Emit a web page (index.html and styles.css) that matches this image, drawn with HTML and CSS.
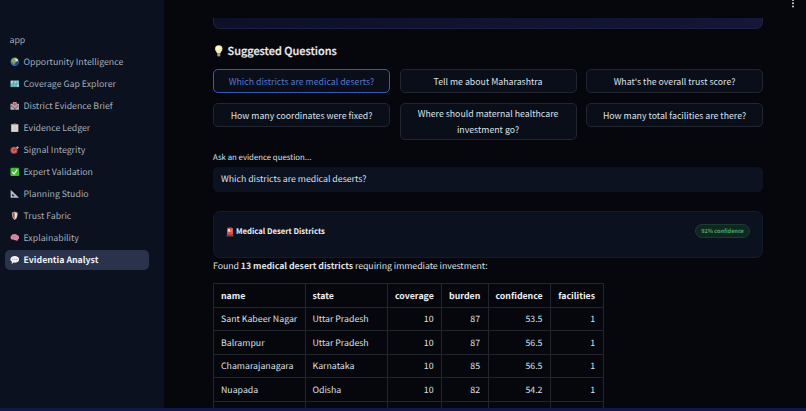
FILE: index.html
```html
<!DOCTYPE html>
<html lang="en">
<head>
<meta charset="utf-8">
<title>Evidentia Analyst</title>
<link rel="stylesheet" href="styles.css">
</head>
<body>
<div class="app">
  <nav class="sidebar">
    <a class="link"><span>app</span></a>
    <a class="link"><svg viewBox="0 0 10 10"><circle cx="5" cy="5" r="4.4" fill="#3d72b8"/><path d="M2 2Q4 0 6 1L5 3 6 5 4 8 3 6 1 5Z" fill="#85a65b"/><path d="M5 1.5Q8 1 8.5 4L6 5Z" fill="#e4e3b0"/><path d="M7 5L9 5 7 9 5 8Z" fill="#233e83"/></svg><span>Opportunity Intelligence</span></a>
    <a class="link"><svg viewBox="0 0 10 10"><path d="M.5 1.5H9.5V8.5H.5Z" fill="#6eb6c7"/><path d="M1 2L4 2 3 4 1 5ZM5 2H8L7 5 5 4ZM3 6L5 5 4 8ZM7 6H9V8H7Z" fill="#d0dfc0"/><path d="M3.5 1.5V8.5M6.5 1.5V8.5" stroke="#397e98" stroke-width=".6"/></svg><span>Coverage Gap Explorer</span></a>
    <a class="link"><svg viewBox="0 0 10 10"><path d="M.5 3H3V1H7V3H9.5V9.3H.5Z" fill="#b7abb2"/><path d="M4.3 1.5H5.7V2.6H6.8V4H5.7V5H4.3V4H3.2V2.6H4.3Z" fill="#d34e58"/><path d="M1.3 4.5H2.5V6H1.3ZM7.5 4.5H8.7V6H7.5ZM2.6 6H4V7H2.6ZM6 6H7.4V7H6ZM4.2 7H5.8V9.3H4.2Z" fill="#605867"/></svg><span>District Evidence Brief</span></a>
    <a class="link"><svg viewBox="0 0 10 10"><rect x="1" y="1" width="8" height="8.6" rx=".6" fill="#a99581"/><path d="M1.7 2H8.3V9H1.7Z" fill="#dedbd7"/><path d="M3.3.6H6.7V2.2H3.3Z" fill="#999ba2"/><path d="M3 4H7M3 5.5H7M3 7H7" stroke="#b8b8ba" stroke-width=".5"/></svg><span>Evidence Ledger</span></a>
    <a class="link"><svg viewBox="0 0 10 10"><circle cx="4.2" cy="5.6" r="3.7" fill="#c74842"/><circle cx="4.2" cy="5.6" r="2.3" fill="#d98078"/><circle cx="4.2" cy="5.6" r="1.5" fill="#c63833"/><path d="M4.5 5.4L8 2" stroke="#384653" stroke-width=".8"/><path d="M6.2 3.2L7.8 .8 8.3 2 9.8 2.1 8 4.2Z" fill="#91bfb4"/></svg><span>Signal Integrity</span></a>
    <a class="link"><svg viewBox="0 0 10 10"><rect x=".5" y=".7" width="9" height="8.8" rx="1.2" fill="#43b934"/><path d="M2.4 5.2L4.3 7.4 7.7 2.6" fill="none" stroke="#f5fff2" stroke-width="1.2"/></svg><span>Expert Validation</span></a>
    <a class="link"><svg viewBox="0 0 10 10"><path d="M.7.8L9.5 9.2H.7ZM2.4 5V7.5H5Z" fill="#b4c2cf" fill-rule="evenodd"/></svg><span>Planning Studio</span></a>
    <a class="link"><svg viewBox="0 0 10 10"><path d="M5 .5Q6.2 1.5 8 1.5V4Q7.9 7.7 5 9.6 2.1 7.7 2 4V1.5Q3.8 1.5 5 .5Z" fill="#b8b5b3"/><path d="M5 1.5Q4 2.3 2.7 2.4V4Q2.9 7 5 8.6Z" fill="#a55545"/><path d="M5 1.5Q6 2.3 7.3 2.4V4Q7.1 7 5 8.6Z" fill="#eee0d3"/></svg><span>Trust Fabric</span></a>
    <a class="link"><svg viewBox="0 0 10 10"><path d="M1 6Q-.1 4 1.3 2.8 2.2 1.1 4 1.4 6 .7 7.4 2 9.5 2.5 9.5 4.5 9.9 6 8.4 6.6L7.6 8.4 6 7.5Q4.5 8 3.4 6.8 1.8 7.3 1 6Z" fill="#dc8fa7"/><path d="M2 3.8Q3.3 2.6 4.2 4M5 2.6Q6.8 3 6.3 4.5M2.8 5.5Q5 4.6 5.3 6M7 5.3Q8 4.5 8.4 5.2" fill="none" stroke="#ac5778" stroke-width=".6"/></svg><span>Explainability</span></a>
    <a class="link current"><svg viewBox="0 0 10 10"><path d="M5 1C7.7 1 9.6 2.4 9.6 4.6S7.7 8.1 5 8.1L4 8 1.7 9.4 2.1 7.3C1 6.7.4 5.8.4 4.6.4 2.4 2.3 1 5 1Z" fill="#f2f2f4"/><path d="M2.5 4.6H3.4M4.6 4.6H5.5M6.7 4.6H7.6" stroke="#777e8d" stroke-width=".9"/></svg><span>Evidentia Analyst</span></a>
  </nav>
  <main class="main">
    <svg class="menu" viewBox="0 0 4 12"><circle cx="2" cy="2" r="1" /><circle cx="2" cy="5.2" r="1"/><circle cx="2" cy="8.4" r="1"/></svg>
    <div class="hero"></div>
    <h3 class="heading"><svg viewBox="0 0 10 12"><path d="M5 .3A3.7 3.7 0 0 1 8.7 4C8.7 6 7 6.7 6.7 8.5H3.3C3 6.7 1.3 6 1.3 4A3.7 3.7 0 0 1 5 .3Z" fill="#f8e9ae"/><circle cx="4.3" cy="3.3" r="1.8" fill="#fff9df"/><path d="M3.5 8.5H6.5V10.7L5.7 11.6H4.3L3.5 10.7Z" fill="#a09f9a"/></svg><span>Suggested Questions</span></h3>
    <div class="questions">
      <button class="question active"><span>Which districts are medical deserts?</span></button>
      <button class="question"><span>Tell me about Maharashtra</span></button>
      <button class="question"><span>What's the overall trust score?</span></button>
      <button class="question"><span>How many coordinates were fixed?</span></button>
      <button class="question"><span>Where should maternal healthcare<br>investment go?</span></button>
      <button class="question"><span>How many total facilities are there?</span></button>
    </div>
    <div class="label"><span>Ask an evidence question...</span></div>
    <div class="input"><span>Which districts are medical deserts?</span></div>
    <section class="card">
      <div class="card-title"><svg viewBox="0 0 8 10"><rect x="1" y=".6" width="6" height="7.8" rx="1.6" fill="#d45450"/><path d="M2 2H4V4.8H2Z" fill="#ffd9cb"/><path d="M4 5L6 2.5" stroke="#f4a091"/><path d="M.5 7.6H7.5V9.5H.5Z" fill="#833f42"/></svg><span>Medical Desert Districts</span></div>
      <div class="badge"><span>92% confidence</span></div>
    </section>
    <p class="found"><span>Found <b>13 medical desert districts</b> requiring immediate investment:</span></p>
    <table class="table">
      <colgroup><col class="c-name"><col class="c-state"><col class="c-coverage"><col class="c-burden"><col class="c-confidence"><col class="c-facilities"></colgroup>
      <tr><th>name</th><th>state</th><th>coverage</th><th>burden</th><th>confidence</th><th>facilities</th></tr>
      <tr><td>Sant Kabeer Nagar</td><td>Uttar Pradesh</td><td>10</td><td>87</td><td>53.5</td><td>1</td></tr>
      <tr><td>Balrampur</td><td>Uttar Pradesh</td><td>10</td><td>87</td><td>56.5</td><td>1</td></tr>
      <tr><td>Chamarajanagara</td><td>Karnataka</td><td>10</td><td>85</td><td>56.5</td><td>1</td></tr>
      <tr><td>Nuapada</td><td>Odisha</td><td>10</td><td>82</td><td>54.2</td><td>1</td></tr>
      <tr><td></td><td></td><td></td><td></td><td></td><td></td></tr>
    </table>
  </main>
</div>
<div class="bottom"></div>
</body>
</html>
```
FILE: styles.css
```css
* { box-sizing: border-box; }
body {
  margin: 0;
  height: 411px;
  overflow: hidden;
  display: flex;
  flex-direction: column;
  background: #06070c;
  color: #dce1ea;
  font: 8.77px/16px "Noto Sans CJK SC", "Open Sans", sans-serif;
  text-rendering: geometricPrecision;
}
.app { flex: none; height: 407.5px; display: flex; overflow: hidden; }
.bottom { flex: 1; background: #10194a; }

.sidebar {
  flex: none;
  width: 164px;
  padding: 29.5px 15px 0 5px;
  background: #0b111e;
  display: flex;
  flex-direction: column;
  gap: 2px;
}
.link {
  height: 20px;
  padding: 0 0 0 4.5px;
  display: flex;
  align-items: center;
  gap: 4.5px;
  border-radius: 5px;
  color: #a8afbb;
  white-space: nowrap;
}
.link svg { width: 9.5px; height: 9.5px; flex: none; }
.current { background: #2a334b; color: #eef1f7; font-weight: 700; }

.main { flex: 1; position: relative; padding: 17.5px 43px 0 49px; }
.menu { position: absolute; top: -2px; right: 11.5px; width: 4px; height: 12px; fill: #d5d7dc; }
.hero {
  height: 11px;
  border: 1px solid #1b2140;
  border-top: 0;
  border-radius: 0 0 7px 7px;
  background: linear-gradient(90deg, #0d1028, #151638);
}
.heading {
  margin: 13.5px 0 0;
  height: 18px;
  display: flex;
  align-items: center;
  gap: 3px;
  font-size: 10.95px;
  font-weight: 500;
  line-height: 18px;
  color: #eaedf4;
  -webkit-text-stroke: .2px #eaedf4;
}
.heading svg { width: 11.5px; height: 12px; }
.questions {
  margin-top: 8.5px;
  display: grid;
  grid-template-columns: repeat(3, 177px);
  justify-content: space-between;
  align-items: start;
  row-gap: 9.5px;
}
.question {
  min-height: 24.5px;
  padding: 2.75px 8px 1.75px;
  border: 1px solid #20252f;
  border-radius: 5px;
  background: #0a0e18;
  color: inherit;
  font: inherit;
  line-height: 15.5px;
  text-align: center;
}
.active { border-color: #3b5aae; color: #5577d2; }
.label { margin-top: 10px; padding-top: .75px; height: 14px; font-size: 7.8px; line-height: 14px; }
.input {
  margin-top: 2.5px;
  height: 25px;
  padding: 4.5px 8px;
  border-radius: 5px;
  background: #0c1220;
}
.card {
  margin-top: 19.5px;
  height: 47px;
  padding: 12px 12px 0 12px;
  display: flex;
  justify-content: space-between;
  align-items: flex-start;
  border: 1px solid #131c2c;
  border-radius: 7px;
  background: #0b111e;
}
.card-title { height: 15px; display: flex; align-items: center; gap: 2px; font-size: 7.7px; font-weight: 700; color: #edf0f6; }
.card-title svg { width: 8px; height: 10px; }
.badge {
  width: 55px;
  height: 13.5px;
  border: 1px solid #193d2c;
  border-radius: 7px;
  background: #0f2720;
  color: #4fa765;
  font-size: 5.5px;
  font-weight: 700;
  line-height: 12px;
  text-align: center;
}
.found { margin: 0; height: 16px; letter-spacing: -.045px; }
.table {
  margin-top: 9px;
  width: 389.5px;
  table-layout: fixed;
  border-collapse: collapse;
}
.c-name { width: 91.5px; }
.c-state { width: 82.5px; }
.c-coverage { width: 54px; }
.c-burden { width: 46.5px; }
.c-confidence { width: 62.5px; }
.c-facilities { width: 52.5px; }
.table th, .table td {
  height: 23.6px;
  padding: .8px 7.5px 0 7px;
  border: 1px solid #22252b;
  line-height: 16px;
  text-align: right;
  white-space: nowrap;
}
.table th:nth-child(-n+2), .table td:nth-child(-n+2) { text-align: left; }
.table th { color: #edf0f6; font-weight: 700; }
```
